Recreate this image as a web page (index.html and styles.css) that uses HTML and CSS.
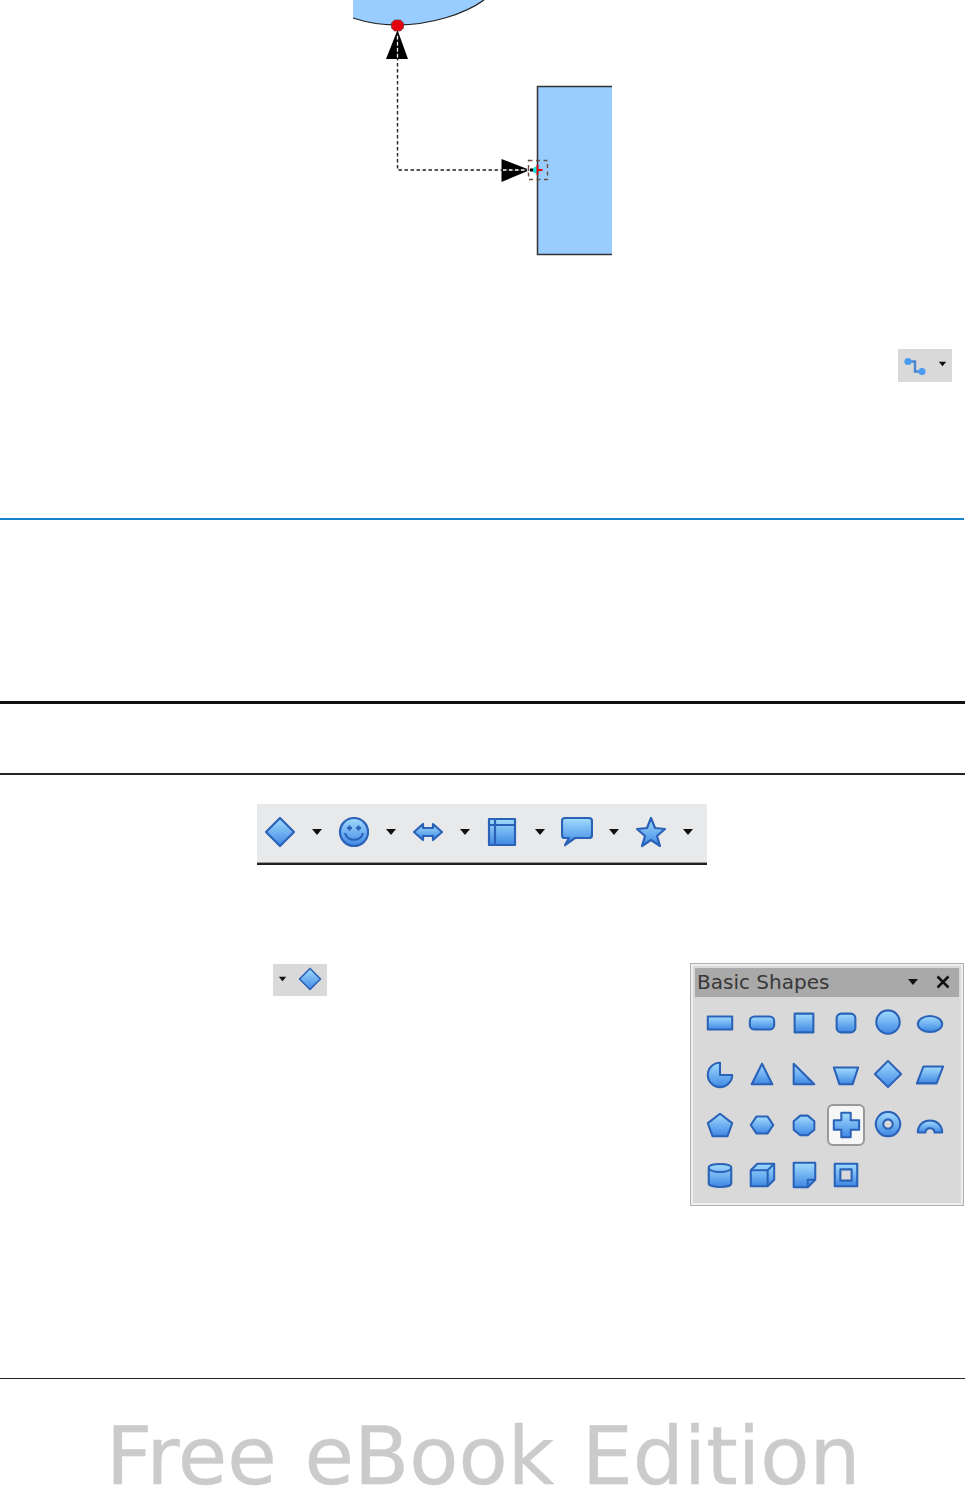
FILE: index.html
```html
<!DOCTYPE html>
<html lang="en">
<head>
    <meta charset="UTF-8">
    <meta name="viewport" content="width=device-width, initial-scale=1.0">
    <title>Free eBook Edition</title>
    <link rel="stylesheet" href="styles.css">
</head>
<body>
    <!-- shared icon definitions -->
    <svg class="defs" aria-hidden="true">
        <defs>
            <linearGradient id="blue" x1="0" y1="0" x2="0" y2="1">
                <stop offset="0" stop-color="#a2dcfd"/>
                <stop offset="1" stop-color="#3f88e4"/>
            </linearGradient>
        </defs>
        <symbol id="drop" viewBox="0 0 12 8"><path d="M1 1h10L6 7z" fill="#111"/></symbol>
        <symbol id="diamond" viewBox="0 0 32 32"><path d="M16 2l14 14-14 14L2 16z"/></symbol>
        <symbol id="smile" viewBox="0 0 32 32"><circle cx="16" cy="16" r="14"/><path d="M7 17c2 9 16 9 18 0" class="line"/><path d="M9 12h5M11.500 9.500v5M18 12h5M20.500 9.500v5" class="line"/></symbol>
        <symbol id="arrows" viewBox="0 0 32 32"><path d="M2 16l9-8v4h10V8l9 8-9 8v-4H11v4z"/></symbol>
        <symbol id="frame" viewBox="0 0 32 32"><path d="M3 3h26v26H3z"/><path d="M3 9h26M9 3v26" class="line"/></symbol>
        <symbol id="callout" viewBox="0 0 32 32"><path d="M6 2h22q3 0 3 3v14q0 3-3 3H14l-10 7 4-7H4q-3 0-3-3V5q0-3 3-3z"/></symbol>
        <symbol id="star" viewBox="0 0 32 32"><path d="M16 2l4 10 10 1-8 7 3 10-9-6-9 6 3-10-8-7 10-1z"/></symbol>
        <symbol id="rect" viewBox="0 0 32 32"><path d="M3 9h26v14H3z"/></symbol>
        <symbol id="rounded" viewBox="0 0 32 32"><rect x="3" y="9" width="26" height="14" rx="5"/></symbol>
        <symbol id="square" viewBox="0 0 32 32"><path d="M6 6h20v20H6z"/></symbol>
        <symbol id="roundsq" viewBox="0 0 32 32"><rect x="6" y="6" width="20" height="20" rx="5"/></symbol>
        <symbol id="circle" viewBox="0 0 32 32"><circle cx="16" cy="15" r="12.500"/></symbol>
        <symbol id="ellipse" viewBox="0 0 32 32"><ellipse cx="16" cy="17" rx="13" ry="8.500"/></symbol>
        <symbol id="pie" viewBox="0 0 32 32"><path d="M16 4A13 13 0 1 0 29 17H16z"/></symbol>
        <symbol id="triangle" viewBox="0 0 32 32"><path d="M16 5l11 22H5z"/></symbol>
        <symbol id="righttri" viewBox="0 0 32 32"><path d="M5 5l22 22H5z"/></symbol>
        <symbol id="trapezoid" viewBox="0 0 32 32"><path d="M3 9h26l-6 18H9z"/></symbol>
        <symbol id="parallel" viewBox="0 0 32 32"><path d="M9 8h21l-7 18H2z"/></symbol>
        <symbol id="pentagon" viewBox="0 0 32 32"><path d="M16 4l13 10-5 14H8L3 14z"/></symbol>
        <symbol id="hexagon" viewBox="0 0 32 32"><path d="M10 7h12l6 9-6 9H10l-6-9z"/></symbol>
        <symbol id="octagon" viewBox="0 0 32 32"><path d="M12 6h8l7 6v9l-7 6h-8l-7-6v-9z"/></symbol>
        <symbol id="cross" viewBox="0 0 32 32"><path d="M11 3h10v8h9v10h-9v8H11v-8H3V11h8z"/></symbol>
        <symbol id="ring" viewBox="0 0 32 32"><path fill-rule="evenodd" d="M16 2a13 13 0 1 0 .01 0zM16 10a5 5 0 1 1-.01 0z"/></symbol>
        <symbol id="arch" viewBox="0 0 32 32"><path d="M3 24c0-17 26-17 26 0h-8c-1-6-9-6-10 0z"/></symbol>
        <symbol id="can" viewBox="0 0 32 32"><path d="M4 8c0-5 24-5 24 0v17c0 5-24 5-24 0z"/><path d="M4 9c2 5 22 5 24 0" class="line"/></symbol>
        <symbol id="cube" viewBox="0 0 32 32"><path d="M4 11l7-7h18v17l-7 7H4z"/><path d="M4 11h18v17M22 11l7-7" class="line"/></symbol>
        <symbol id="note" viewBox="0 0 32 32"><path d="M5 3h23v18l-8 8H5z"/><path d="M20 29v-8h8" class="line"/></symbol>
        <symbol id="box" viewBox="0 0 32 32"><path fill-rule="evenodd" d="M4 4h24v24H4zM10 10v12h12V10z"/></symbol>
    </svg>

    <svg class="figure" width="965" height="260" viewBox="0 0 965 260">
        <path d="M353 0V18C368 23 385 25 397 25C430 25 465 14 484 0z" fill="#99ccff"/>
        <path d="M353 18C368 23 385 25 397 25C430 25 465 14 484 0" fill="none" stroke="#222" stroke-width="1.300"/>
        <path d="M612 86.500H537.500V254.500H612" fill="#99ccff" stroke="#333" stroke-width="1.500"/>
        <path d="M397.500 30L408 59H386z M530 170L501.500 159V182z" fill="#000"/>
        <path d="M530 170H537" stroke="#000" stroke-width="3"/>
        <path d="M397.500 33V170H530" fill="none" stroke="#222" stroke-width="1.400" stroke-dasharray="3.500 2.500"/>
        <path d="M397.500 36V59M503 170H528" fill="none" stroke="#fff" stroke-width="1.300" stroke-dasharray="3.500 2.500"/>
        <path d="M394.500 20h6l3 3v5l-3 3h-6l-3-3v-5z" fill="#e6000f" stroke="#633" stroke-width=".7"/>
        <path d="M528.500 160.500h19v19h-19z" fill="none" stroke="#6b5040" stroke-width="1.400" stroke-dasharray="4 3.500"/>
        <circle cx="536.500" cy="170" r="3.500" fill="#19e6e6"/>
        <path d="M537.500 165v10M537.500 170h5" stroke="#e6000f" stroke-width="2"/>
    </svg>

    <div class="button-row connector-row">
        <div class="tool-button">
            <svg class="tool-icon" width="28" height="28" viewBox="0 0 28 28">
                <path d="M8 9.500h7v10h7" fill="none" stroke="#4a86d4" stroke-width="2.400"/>
                <circle cx="8" cy="9.500" r="3.600" fill="#4a9cf0"/>
                <circle cx="22" cy="19.500" r="3.600" fill="#4a9cf0"/>
            </svg>
            <svg class="drop-small"><use href="#drop"/></svg>
        </div>
    </div>

    <hr class="rule-blue">
    <hr class="rule-heavy">
    <hr class="rule-thin">

    <div class="toolbar">
        <svg class="icon-large"><use href="#diamond"/></svg><svg class="drop"><use href="#drop"/></svg>
        <svg class="icon-large"><use href="#smile"/></svg><svg class="drop"><use href="#drop"/></svg>
        <svg class="icon-large"><use href="#arrows"/></svg><svg class="drop"><use href="#drop"/></svg>
        <svg class="icon-large"><use href="#frame"/></svg><svg class="drop"><use href="#drop"/></svg>
        <svg class="icon-large"><use href="#callout"/></svg><svg class="drop"><use href="#drop"/></svg>
        <svg class="icon-large"><use href="#star"/></svg><svg class="drop"><use href="#drop"/></svg>
    </div>

    <div class="shapes-row">
        <div class="tool-button flyout-button">
            <svg class="drop-small"><use href="#drop"/></svg>
            <svg class="icon-small"><use href="#diamond"/></svg>
        </div>
        <div class="panel">
            <div class="panel-title">
                <span class="panel-name">Basic Shapes</span>
                <svg class="drop-title"><use href="#drop"/></svg>
                <svg class="panel-close" viewBox="0 0 14 14"><path d="M1.500 1.500l11 11M12.500 1.500l-11 11"/></svg>
            </div>
            <div class="panel-grid">
                <div class="cell"><svg class="shape"><use href="#rect"/></svg></div>
                <div class="cell"><svg class="shape"><use href="#rounded"/></svg></div>
                <div class="cell"><svg class="shape"><use href="#square"/></svg></div>
                <div class="cell"><svg class="shape"><use href="#roundsq"/></svg></div>
                <div class="cell"><svg class="shape"><use href="#circle"/></svg></div>
                <div class="cell"><svg class="shape"><use href="#ellipse"/></svg></div>
                <div class="cell"><svg class="shape"><use href="#pie"/></svg></div>
                <div class="cell"><svg class="shape"><use href="#triangle"/></svg></div>
                <div class="cell"><svg class="shape"><use href="#righttri"/></svg></div>
                <div class="cell"><svg class="shape"><use href="#trapezoid"/></svg></div>
                <div class="cell"><svg class="shape"><use href="#diamond"/></svg></div>
                <div class="cell"><svg class="shape"><use href="#parallel"/></svg></div>
                <div class="cell"><svg class="shape"><use href="#pentagon"/></svg></div>
                <div class="cell"><svg class="shape"><use href="#hexagon"/></svg></div>
                <div class="cell"><svg class="shape"><use href="#octagon"/></svg></div>
                <div class="cell selected"><svg class="shape"><use href="#cross"/></svg></div>
                <div class="cell"><svg class="shape"><use href="#ring"/></svg></div>
                <div class="cell"><svg class="shape"><use href="#arch"/></svg></div>
                <div class="cell"><svg class="shape"><use href="#can"/></svg></div>
                <div class="cell"><svg class="shape"><use href="#cube"/></svg></div>
                <div class="cell"><svg class="shape"><use href="#note"/></svg></div>
                <div class="cell"><svg class="shape"><use href="#box"/></svg></div>
            </div>
        </div>
    </div>

    <hr class="rule-footer">
    <div class="watermark">Free eBook Edition</div>
</body>
</html>
```

FILE: styles.css
```css
html, body {
    margin: 0;
    padding: 0;
    background-color: #fff;
}
body {
    height: 1489px;
    overflow: hidden;
    font-family: "DejaVu Sans", sans-serif;
}
hr {
    border: 0;
    margin: 0;
}
svg {
    display: block;
    flex: none;
}
.defs {
    width: 0;
    height: 0;
}
symbol {
    overflow: visible;
}
.icon-large, .icon-small, .shape {
    fill: url(#blue);
    stroke: #2a62b8;
    stroke-width: 2.2;
    stroke-linejoin: round;
    filter: blur(0.4px);
}
.line {
    fill: none;
}

/* grey buttons in the running text */
.button-row {
    display: flex;
    justify-content: flex-end;
}
.connector-row {
    margin-top: 89px;
    padding-right: 13px;
}
.tool-button {
    box-sizing: border-box;
    display: flex;
    align-items: center;
    width: 54px;
    height: 33px;
    background-color: #d9d9d9;
}
.tool-icon {
    margin-left: 2px;
    filter: blur(0.4px);
}
.drop-small {
    width: 9px;
    height: 6px;
    margin-left: 10px;
    margin-bottom: 4px;
}

/* rules */
.rule-blue {
    width: 964px;
    height: 2px;
    margin-top: 136px;
    background-color: #1584c9;
}
.rule-heavy {
    height: 3px;
    margin-top: 181px;
    background-color: #111;
}
.rule-thin {
    height: 2px;
    margin-top: 69px;
    background-color: #222;
}
.rule-footer {
    height: 1px;
    margin-top: 172px;
    background-color: #222;
}

/* drawing toolbar */
.toolbar {
    box-sizing: border-box;
    display: grid;
    grid-template-columns: repeat(12, 37.15px);
    align-items: center;
    justify-items: center;
    width: 450px;
    height: 61px;
    margin: 29px 0 0 257px;
    padding: 0 0 3px 4px;
    background-color: #e8e9eb;
    border-bottom: 2px solid #222;
    box-shadow: inset 0 -1px 0 #999;
}
.icon-large {
    width: 32px;
    height: 32px;
}
.drop {
    width: 12px;
    height: 8px;
}

/* flyout button and Basic Shapes panel */
.shapes-row {
    display: flex;
    align-items: flex-start;
    margin-top: 98px;
    padding-left: 273px;
}
.flyout-button {
    height: 32px;
    margin-top: 1px;
}
.flyout-button .drop-small {
    margin: 0 0 2px 5px;
}
.icon-small {
    width: 24px;
    height: 24px;
    margin-left: 11px;
    margin-bottom: 3px;
}
.panel {
    box-sizing: border-box;
    width: 274px;
    height: 243px;
    margin-left: 363px;
    padding: 4px;
    background-color: #d9d9d9;
    border: 1px solid #b0b0b0;
    box-shadow: inset 0 0 0 2px #eee;
}
.panel-title {
    display: flex;
    align-items: center;
    height: 29px;
    padding: 0 9px 2px 2px;
    box-sizing: border-box;
    background-color: #a9a9a9;
    color: #383838;
}
.panel-name {
    flex: 1;
    font-size: 20px;
}
.drop-title {
    width: 12px;
    height: 8px;
    margin-right: 17px;
}
.panel-close {
    width: 14px;
    height: 14px;
    fill: none;
    stroke: #111;
    stroke-width: 2.500;
}
.panel-grid {
    display: grid;
    grid-template-columns: repeat(6, 42px);
    grid-auto-rows: 50.7px;
    align-items: center;
    justify-items: center;
    padding: 1px 0 0 4px;
}
.cell {
    display: flex;
    align-items: center;
    justify-content: center;
    width: 38px;
    height: 42px;
    border-radius: 6px;
}
.cell.selected {
    background-color: #f6f6f6;
    border: 2px solid #999;
    box-sizing: border-box;
}
.shape {
    width: 30px;
    height: 30px;
}

.watermark {
    margin: 45px 0 0 106px;
    color: #cbcbcb;
    font-size: 80.5px;
    line-height: 64px;
    word-spacing: 2px;
    -webkit-text-stroke: 0.4px #cbcbcb;
    white-space: nowrap;
}
```
